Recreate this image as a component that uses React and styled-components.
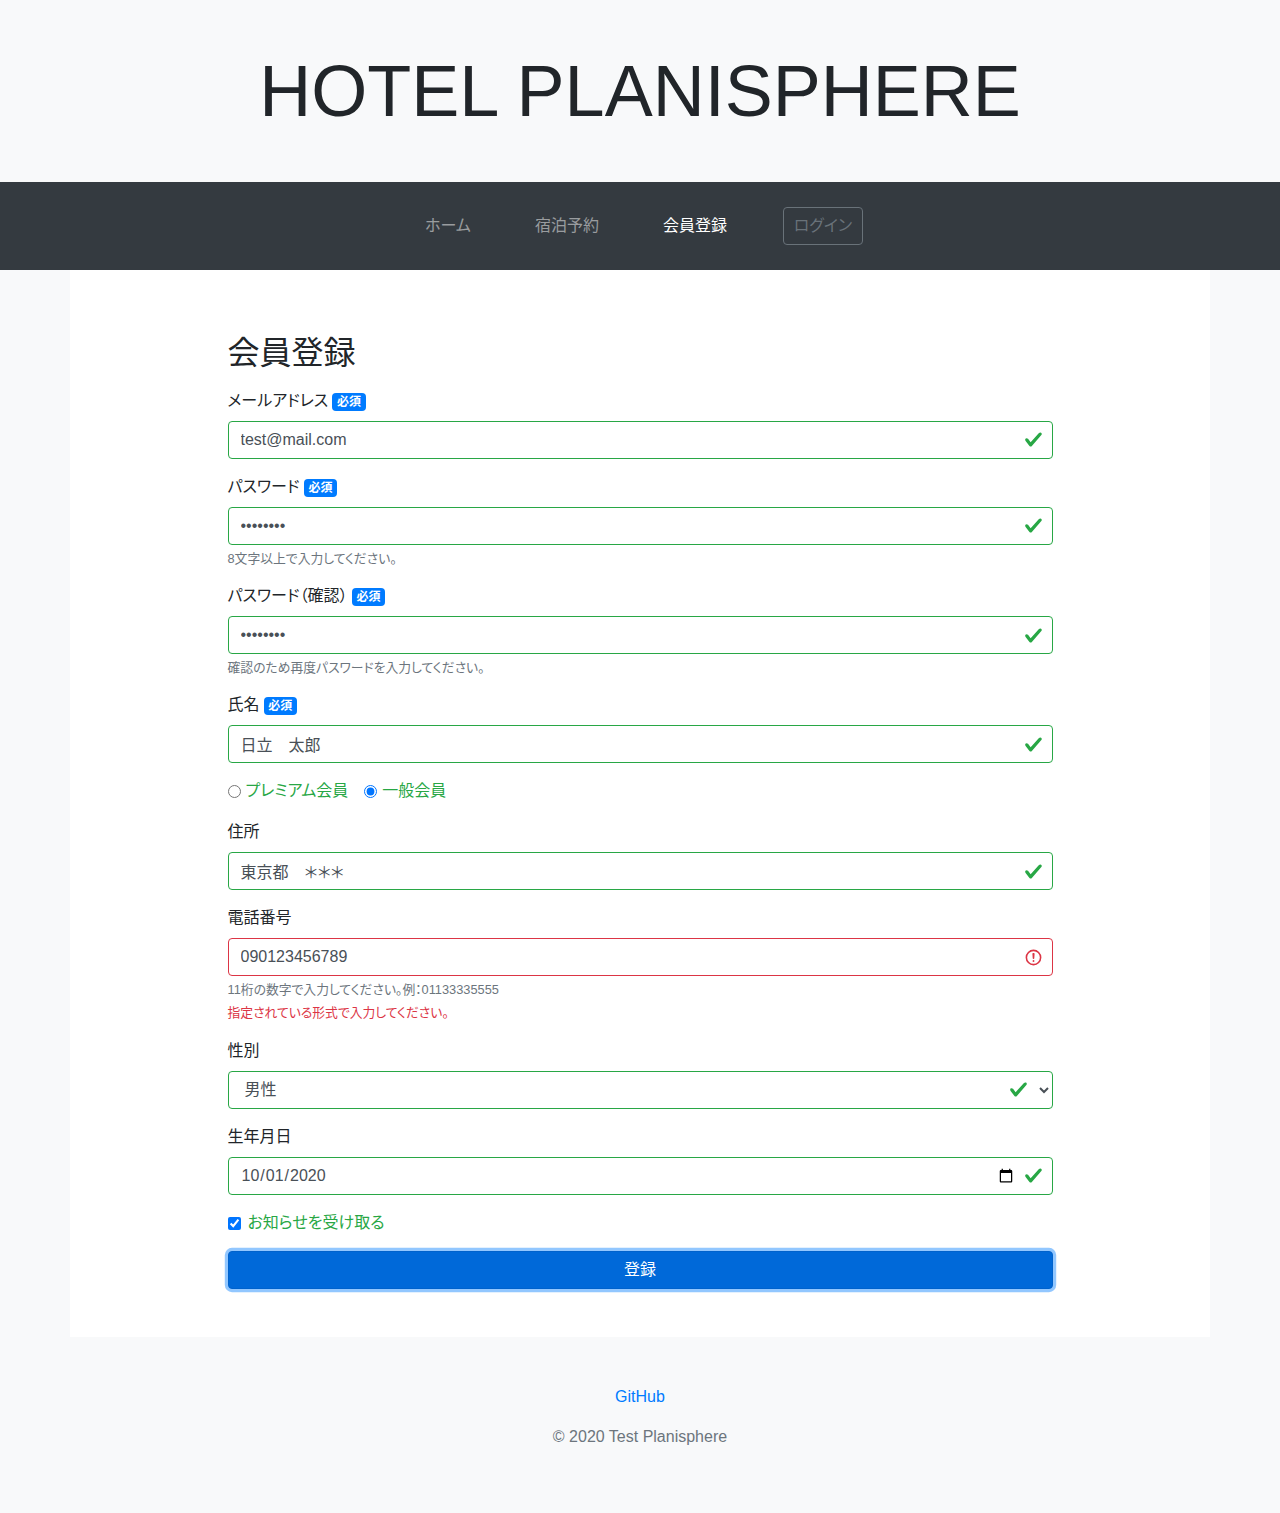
import React from "react";
import styled, { createGlobalStyle, css } from "styled-components";

const CHECK = `url("data:image/svg+xml,%3csvg xmlns='http://www.w3.org/2000/svg' width='8' height='8' viewBox='0 0 8 8'%3e%3cpath fill='%2328a745' d='M2.3 6.73L.6 4.53c-.4-1.04.46-1.4 1.1-.8l1.1 1.4 3.4-3.8c.6-.63 1.6-.27 1.2.7l-4 4.6c-.43.5-.8.4-1.1.1z'/%3e%3c/svg%3e")`;
const ALERT = `url("data:image/svg+xml,%3csvg xmlns='http://www.w3.org/2000/svg' width='12' height='12' fill='none' stroke='%23dc3545' viewBox='0 0 12 12'%3e%3ccircle cx='6' cy='6' r='4.5'/%3e%3cpath stroke-linejoin='round' d='M5.8 3.6h.4L6 6.5z'/%3e%3ccircle cx='6' cy='8.2' r='.6' fill='%23dc3545' stroke='none'/%3e%3c/svg%3e")`;
const FONT = `"Liberation Sans", "Noto Sans CJK JP", sans-serif`;

const GlobalStyle = createGlobalStyle`
  *, *::before, *::after { box-sizing: border-box; }
  body {
    margin: 0;
    background: #f8f9fa;
    color: #212529;
    font: 400 16px/1.5 ${FONT};
    font-feature-settings: "palt";
  }
`;

const Header = styled.header`
  padding: 48px 0;
  text-align: center;
`;
const Brand = styled.h1`
  margin: 0;
  font-size: 72px;
  font-weight: 300;
  line-height: 1.2;
`;
const Nav = styled.nav`
  display: flex;
  justify-content: center;
  align-items: center;
  height: 88px;
  background: #343a40;
`;
const NavLink = styled.a`
  padding: 8px 32px;
  color: ${(p) => (p.$active ? "#fff" : "rgba(255,255,255,.5)")};
  text-decoration: none;
  letter-spacing: ${(p) => p.$track || 0}px;
`;
const LoginButton = styled.button`
  width: 80px;
  height: 38px;
  margin: 0 24px;
  padding: 6px 0;
  border: 1px solid #6c757d;
  border-radius: 4px;
  background: transparent;
  color: #6c757d;
  font: inherit;
  font-feature-settings: "palt";
  letter-spacing: ${(p) => p.$track || 0}px;
  opacity: 0.95;
`;
const Container = styled.main`
  width: 1140px;
  margin: 0 auto;
  padding: 64px 157.5px 48px;
  background: #fff;
`;
const Title = styled.h2`
  margin: 0 0 16px;
  font-size: 32px;
  font-weight: 400;
  line-height: 1.2;
`;
const Group = styled.div`
  margin-bottom: 16px;
`;
const Label = styled.label`
  display: flex;
  align-items: center;
  gap: 4px;
  height: 24px;
  margin-bottom: 8px;
`;
const LabelText = styled.span`
  letter-spacing: ${(p) => p.$track || 0}px;
`;
const Badge = styled.span`
  margin-top: 2px;
  padding: 3px 4.8px;
  border-radius: 4px;
  background: #007bff;
  color: #fff;
  font-size: 12px;
  font-weight: 700;
  line-height: 1;
`;
const field = css`
  display: block;
  width: 100%;
  height: 38px;
  margin: 0;
  padding: 6px 36px 6px 12px;
  border: 1px solid ${(p) => (p.$invalid ? "#dc3545" : "#28a745")};
  border-radius: 4px;
  background: #fff ${(p) => (p.$invalid ? ALERT : CHECK)} no-repeat right 9px center / 18.75px 18.75px;
  color: #495057;
  font: 400 16px/1.5 ${FONT};
  font-feature-settings: "palt";
  outline: none;
`;
const Input = styled.input`
  ${field}
`;
const Select = styled.select`
  ${field}
  padding-right: 12px;
  background-position: right 24px center;
`;
const Note = styled.small`
  display: block;
  margin-top: 4px;
  color: ${(p) => (p.$error ? "#dc3545" : "#6c757d")};
  font-size: 12.8px;
  line-height: 1.5;
  letter-spacing: ${(p) => p.$track || 0}px;
`;
const Choices = styled.div`
  display: flex;
  gap: 16px;
  height: 24px;
  margin-bottom: 17px;
`;
const Choice = styled.label`
  display: flex;
  align-items: center;
  height: 24px;
  color: #28a745;
  letter-spacing: ${(p) => p.$track || 0}px;
`;
const Tick = styled.input`
  width: 13px;
  height: 13px;
  margin: 1px ${(p) => p.$gap}px 0 0;
`;
const Submit = styled.button`
  display: block;
  width: 100%;
  height: 38px;
  padding: 6px 12px;
  border: 1px solid #0062cc;
  border-radius: 4px;
  background: #0069d9;
  box-shadow: 0 0 0 3.2px rgba(38, 143, 255, 0.5);
  color: #fff;
  font: inherit;
`;
const Footer = styled.footer`
  padding: 48px 0;
  text-align: center;
`;
const FooterText = styled.p`
  margin: 0 0 16px;
  color: #6c757d;
`;
const FooterLink = styled.a`
  color: #007bff;
  text-decoration: none;
`;

function Field({ label, track, required, children }) {
  return (
    <Group>
      <Label>
        <LabelText $track={track}>{label}</LabelText>
        {required && <Badge>必須</Badge>}
      </Label>
      {children}
    </Group>
  );
}

export default function App() {
  return (
    <>
      <GlobalStyle />
      <Header>
        <Brand>HOTEL PLANISPHERE</Brand>
      </Header>
      <Nav>
        <NavLink>ホーム</NavLink>
        <NavLink>宿泊予約</NavLink>
        <NavLink $active>会員登録</NavLink>
        <LoginButton type="button">ログイン</LoginButton>
      </Nav>
      <Container>
        <Title>会員登録</Title>
        <Field label="メールアドレス" required>
          <Input type="email" defaultValue="test@mail.com" />
        </Field>
        <Field label="パスワード" required>
          <Input type="password" defaultValue="password" />
          <Note>8文字以上で入力してください。</Note>
        </Field>
        <Field label="パスワード（確認）" required>
          <Input type="password" defaultValue="password" />
          <Note>確認のため再度パスワードを入力してください。</Note>
        </Field>
        <Field label="氏名" required>
          <Input defaultValue="日立　太郎" />
        </Field>
        <Choices>
          <Choice>
            <Tick type="radio" name="rank" $gap={5} />
            プレミアム会員
          </Choice>
          <Choice>
            <Tick type="radio" name="rank" $gap={5} defaultChecked />
            一般会員
          </Choice>
        </Choices>
        <Field label="住所">
          <Input defaultValue="東京都　＊＊＊" />
        </Field>
        <Field label="電話番号">
          <Input $invalid defaultValue="090123456789" />
          <Note>11桁の数字で入力してください。例：01133335555</Note>
          <Note $error>指定されている形式で入力してください。</Note>
        </Field>
        <Field label="性別">
          <Select defaultValue="male">
            <option value="male">男性</option>
          </Select>
        </Field>
        <Field label="生年月日">
          <Input type="date" defaultValue="2020-10-01" />
        </Field>
        <Group>
          <Choice>
            <Tick type="checkbox" $gap={7} defaultChecked />
            お知らせを受け取る
          </Choice>
        </Group>
        <Submit type="button">登録</Submit>
      </Container>
      <Footer>
        <FooterText>
          <FooterLink>GitHub</FooterLink>
        </FooterText>
        <FooterText>© 2020 Test Planisphere</FooterText>
      </Footer>
    </>
  );
}
